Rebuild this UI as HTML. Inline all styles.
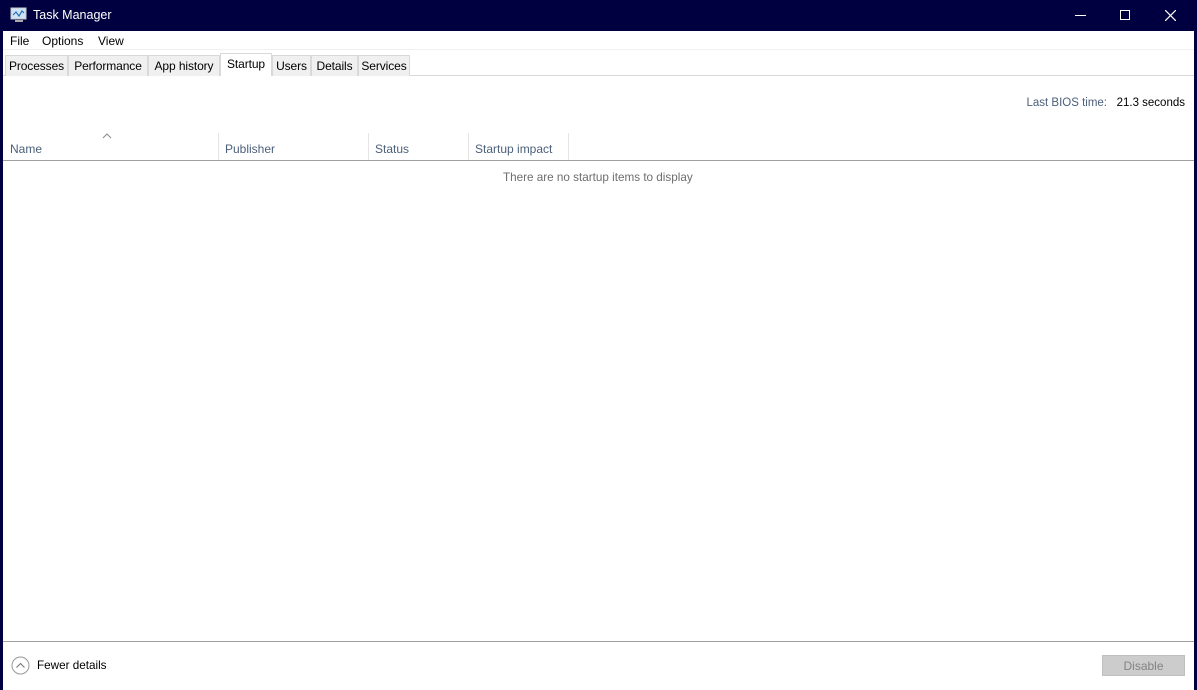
<!DOCTYPE html>
<html><head><style>
*{margin:0;padding:0;box-sizing:border-box}
body{width:1197px;height:690px;background:#000040;position:relative;overflow:hidden;font-family:"Liberation Sans",sans-serif;font-size:12px;color:#000}
.win{position:absolute;left:3px;top:31px;width:1191px;height:659px;background:#fff}
.t{position:absolute;white-space:nowrap}
.tab{position:absolute;top:55px;height:21px;background:#f0f0f0;border:1px solid #d9d9d9;border-bottom:none;padding:3px 0 0;text-align:center;font-size:12px;color:#000;letter-spacing:-0.1px}
.hd{position:absolute;top:133px;height:28px;border-right:1px solid #e5e5e5;color:#4c607a;font-size:12px;padding:9px 6px 0}
</style></head><body>
<svg style="position:absolute;left:10px;top:7px" width="18" height="17" viewBox="0 0 18 17"><rect x="1" y="1" width="15" height="11" fill="#cfe3f5" stroke="#c8c8c8"/><polyline points="3,8 6,5 9,9 12,4 14,6" fill="none" stroke="#2a70b8" stroke-width="1.2"/><rect x="5" y="13" width="8" height="2" fill="#aaa"/></svg>
<div class="t" style="left:33px;top:8px;color:#fff;font-size:12.5px">Task Manager</div>
<div class="t" style="left:1075px;top:15px;width:11px;height:1px;background:#fff"></div>
<div class="t" style="left:1120px;top:10px;width:10px;height:10px;border:1px solid #fff"></div>
<svg style="position:absolute;left:1165px;top:10px" width="11" height="11"><path d="M0 0L11 11M11 0L0 11" stroke="#fff" stroke-width="1.2"/></svg>
<div class="win"></div>
<div class="t" style="left:10px;top:34px">File</div>
<div class="t" style="left:42px;top:34px">Options</div>
<div class="t" style="left:98px;top:34px">View</div>
<div class="t" style="left:3px;top:49px;width:1191px;height:1px;background:#f0f0f0"></div>
<div class="t" style="left:3px;top:75px;width:1191px;height:1px;background:#d9d9d9"></div>
<div class="tab" style="left:5px;width:63px">Processes</div>
<div class="tab" style="left:68px;width:80px">Performance</div>
<div class="tab" style="left:148px;width:72px">App history</div>
<div class="tab" style="left:220px;top:53px;height:23px;width:52px;background:#fff;border-color:#d9d9d9">Startup</div>
<div class="tab" style="left:272px;width:39px">Users</div>
<div class="tab" style="left:311px;width:47px">Details</div>
<div class="tab" style="left:358px;width:52px">Services</div>
<div class="t" style="right:12px;top:97px;font-size:11.5px"><span style="color:#4c607a">Last BIOS time:</span>&nbsp;&nbsp; 21.3 seconds</div>
<div class="hd" style="left:4px;width:215px">Name</div>
<svg style="position:absolute;left:102px;top:133px" width="10" height="6"><path d="M1 5L5 1L9 5" fill="none" stroke="#888"/></svg>
<div class="hd" style="left:219px;width:150px">Publisher</div>
<div class="hd" style="left:369px;width:100px">Status</div>
<div class="hd" style="left:469px;width:100px">Startup impact</div>
<div class="t" style="left:3px;top:160px;width:1191px;height:1px;background:#a0a0a0"></div>
<div class="t" style="left:503px;top:171px;color:#6d6d6d;font-size:11.7px">There are no startup items to display</div>
<div class="t" style="left:3px;top:641px;width:1191px;height:1px;background:#a0a0a0"></div>
<svg style="position:absolute;left:11px;top:656px" width="19" height="19"><circle cx="9.5" cy="9.5" r="8.5" fill="none" stroke="#999"/><path d="M5.5 11.5L9.5 7.5L13.5 11.5" fill="none" stroke="#777" stroke-width="1.1"/></svg>
<div class="t" style="left:37px;top:659px;font-size:11.7px">Fewer details</div>
<div class="t" style="left:1102px;top:655px;width:83px;height:21px;background:#ccc;border:1px solid #bfbfbf;color:#838383;text-align:center;padding-top:3px">Disable</div>
</body></html>
